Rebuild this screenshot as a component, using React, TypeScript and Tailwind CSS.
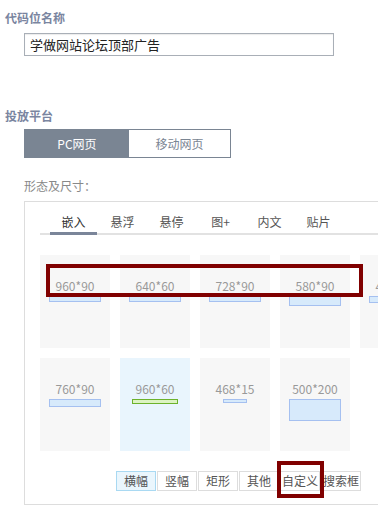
import React from "react";

const tabs = ["嵌入", "悬浮", "悬停", "图+", "内文", "贴片"];

type Size = { label: string; w: number; h: number; green?: boolean; active?: boolean };

const rowOne: Size[] = [
  { label: "960*90", w: 52, h: 6 },
  { label: "640*60", w: 52, h: 6 },
  { label: "728*90", w: 52, h: 6 },
  { label: "580*90", w: 52, h: 10 },
  { label: "468*60", w: 52, h: 7 },
];

const rowTwo: Size[] = [
  { label: "760*90", w: 52, h: 8 },
  { label: "960*60", w: 46, h: 5, green: true, active: true },
  { label: "468*15", w: 24, h: 4 },
  { label: "500*200", w: 52, h: 22 },
];

const kinds = ["横幅", "竖幅", "矩形", "其他", "自定义", "搜索框"];

function SizeCard({ s }: { s: Size }) {
  return (
    <div
      className={
        "flex h-[93px] w-[70px] shrink-0 flex-col items-center pt-[24px] " +
        (s.active ? "bg-[#e9f5fd]" : "bg-[#f7f7f7]")
      }
    >
      <span className="text-[12px] leading-[14px] text-[#999]">{s.label}</span>
      <span
        className={
          "mt-[3px] block border " +
          (s.green ? "border-[#6cb22c] bg-[#dcf3c2]" : "border-[#a5c0f0] bg-[#d7eafb]")
        }
        style={{ width: s.w, height: s.h }}
      />
    </div>
  );
}

export default function App() {
  return (
    <div
      className="relative h-[515px] w-[378px] overflow-hidden bg-white"
      style={{ fontFamily: '"Noto Sans CJK SC", "Liberation Sans", sans-serif' }}
    >
      <div className="pt-[11px]">
        <h3 className="pl-[5px] text-[12px] font-bold leading-[14px] text-[#7a85a0]">代码位名称</h3>
        <div className="ml-[24px] mt-[8px] flex h-[23px] w-[310px] items-center border border-[#a9afb7] pl-[5px] text-[13px] text-[#222] shadow-[inset_0_1px_1px_rgba(0,0,0,0.08)]">
          学做网站论坛顶部广告
        </div>

        <h3 className="mt-[53px] pl-[5px] text-[12px] font-bold leading-[14px] text-[#7a85a0]">投放平台</h3>
        <div className="ml-[24px] mt-[6px] flex h-[29px] w-[207px] border border-[#7a8593] text-[12px]">
          <div className="flex w-[104px] items-center justify-center bg-[#7a8593] text-white">PC网页</div>
          <div className="flex flex-1 items-center justify-center bg-white text-[#7a8593]">移动网页</div>
        </div>

        <p className="ml-[24px] mt-[21px] text-[12px] leading-[14px] text-[#888]">形态及尺寸：</p>

        <div className="ml-[24px] mt-[8px] w-[420px] border border-[#dddddd] pb-[13px]">
          <div className="ml-[15px] flex border-b-2 border-[#e2e2e2] pl-[9px]">
            {tabs.map((t, i) => (
              <div
                key={t}
                className={
                  "mx-[1px] -mb-[2px] w-[47px] border-b-[3px] pb-[3px] pt-[13px] text-center text-[12px] leading-[14px] " +
                  (i === 0 ? "border-[#7a8599] text-[#333]" : "border-transparent text-[#555]")
                }
              >
                {t}
              </div>
            ))}
          </div>

          <div className="ml-[15px] mt-[20px] flex gap-[10px]">
            {rowOne.map((s) => (
              <SizeCard key={s.label} s={s} />
            ))}
          </div>
          <div className="ml-[15px] mt-[10px] flex gap-[10px]">
            {rowTwo.map((s) => (
              <SizeCard key={s.label} s={s} />
            ))}
          </div>

          <div className="ml-[91px] mt-[20px] flex">
            {kinds.map((k, i) => (
              <div
                key={k}
                className={
                  "mr-[1px] flex h-[20px] w-[40px] items-center justify-center whitespace-nowrap border text-[12px] text-[#555] " +
                  (i === 0 ? "border-[#a9d9f2] bg-[#eaf6fd]" : "border-[#dddddd] bg-white")
                }
              >
                {k}
              </div>
            ))}
          </div>
        </div>
      </div>

      <div className="absolute left-[46px] top-[264px] h-[33px] w-[317px] border-4 border-[#800000]" />
      <div className="absolute left-[277px] top-[461px] h-[37px] w-[47px] border-4 border-[#800000]" />
    </div>
  );
}
